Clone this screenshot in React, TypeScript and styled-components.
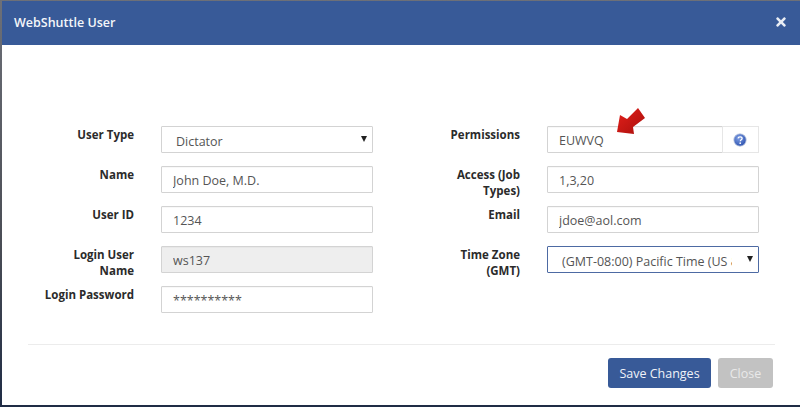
import React, { ReactElement } from 'react';
import styled, { createGlobalStyle } from 'styled-components';
import { FaTimes } from 'react-icons/fa';

const GlobalStyle = createGlobalStyle`
  html, body {
    margin: 0;
    padding: 0;
    background: #56595f;
  }
  * {
    box-sizing: border-box;
  }
`;

const Page = styled.div`
  width: 800px;
  height: 407px;
  overflow: hidden;
  padding: 1px 0 2px 2px;
  background: linear-gradient(#6d7078, #4a4d55 60%, #1f2c45);
  font-family: 'Open Sans', 'Liberation Sans', sans-serif;
`;

const Modal = styled.div`
  display: flex;
  flex-direction: column;
  height: 100%;
  background: #fff;
`;

const Header = styled.div`
  display: flex;
  flex: 0 0 44px;
  align-items: center;
  justify-content: space-between;
  padding: 0 12px 1px 12px;
  background: #385a98;
  color: #f4f6fa;
`;

const Title = styled.h4`
  margin: 0;
  font-size: 12.5px;
  font-weight: 600;
`;

const CloseIcon = styled(FaTimes)`
  width: 14px;
  height: 14px;
  margin-top: -2px;
  color: #e9edf4;
`;

const Body = styled.div`
  flex: 1;
  padding: 81px 24px 0 26px;
`;

const Form = styled.div`
  display: grid;
  grid-template-columns: 345px 345px;
  column-gap: 41px;
  height: 218px;
`;

const Column = styled.div`
  display: flex;
  flex-direction: column;
  gap: 13px;
`;

const Row = styled.div`
  display: grid;
  grid-template-columns: 106px 212px;
  column-gap: 27px;
  height: 27px;
`;

const Label = styled.label`
  padding: 1px 0 0 16px;
  font-size: 11.5px;
  font-weight: 700;
  line-height: 16px;
  text-align: right;
  color: #2b2b2b;
`;

const Input = styled.input`
  width: 100%;
  min-width: 0;
  height: 27px;
  padding: 1px 11px 0;
  border: 1px solid #d3d3d3;
  border-radius: 1px;
  outline: none;
  background: #fff;
  font-family: inherit;
  font-size: 12.5px;
  color: #555;
  box-shadow: inset 0 1px 1px rgba(0, 0, 0, 0.03);

  &:disabled {
    background: #eeeeee;
    opacity: 1;
    -webkit-text-fill-color: #555;
  }
`;

const InputGroup = styled.div`
  position: relative;
  display: flex;
  width: 212px;
`;

const HelpAddon = styled.div`
  display: flex;
  flex: 0 0 37px;
  align-items: center;
  justify-content: center;
  height: 27px;
  margin-left: -1px;
  padding-right: 1px;
  border: 1px solid #e6e6e6;
  background: #fff;
`;

const PointerArrow = styled.svg`
  position: absolute;
  top: -19px;
  left: 69px;
  width: 31px;
  height: 28px;
`;

const SelectWrap = styled.div`
  position: relative;
  width: 212px;
  height: 27px;

  &::after {
    content: '';
    position: absolute;
    top: 10px;
    right: 6px;
    border-left: 3.5px solid transparent;
    border-right: 3.5px solid transparent;
    border-top: 6px solid #222;
    pointer-events: none;
  }
`;

const Select = styled.select<{ $focused?: boolean }>`
  appearance: none;
  display: block;
  width: 100%;
  height: 27px;
  padding: 4px 26px 0 14px;
  border: 1px solid ${(p) => (p.$focused ? '#4d6aa3' : '#d3d3d3')};
  border-radius: 1px;
  outline: none;
  background: #fff;
  font-family: inherit;
  font-size: 12.5px;
  color: #555;
`;

const Footer = styled.div`
  display: flex;
  flex-direction: column;
  height: 60px;
`;

const Divider = styled.hr`
  width: 747px;
  height: 1px;
  margin: 0;
  border: 0;
  background: #ececec;
`;

const Actions = styled.div`
  display: flex;
  justify-content: flex-end;
  gap: 7px;
  padding: 13px 3px 0 0;
`;

const Button = styled.button<{ $primary?: boolean }>`
  height: 30px;
  padding: 0;
  width: ${(p) => (p.$primary ? '103px' : '55px')};
  border: 0;
  border-radius: 3px;
  background: ${(p) => (p.$primary ? '#385a98' : '#c2c2c2')};
  color: ${(p) => (p.$primary ? '#f0f3f8' : '#e9e9e9')};
  font-family: inherit;
  font-size: 12.5px;
`;

function HelpIcon(): ReactElement {
  return (
    <svg width="14" height="14" viewBox="0 0 14 14">
      <defs>
        <radialGradient id="help" cx="40%" cy="35%" r="70%">
          <stop offset="0%" stopColor="#7f9fe4" />
          <stop offset="100%" stopColor="#2a4fae" />
        </radialGradient>
      </defs>
      <circle cx="7" cy="7" r="6.2" fill="url(#help)" stroke="#c3cde0" strokeWidth="0.8" />
      <path d="M5 5.4c.2-1.1 1-1.6 2.1-1.6 1.2 0 2 .7 2 1.6 0 1.4-1.8 1.4-1.8 2.9" fill="none" stroke="#fff" strokeWidth="1.3" />
      <circle cx="7.2" cy="10.2" r="0.85" fill="#fff" />
    </svg>
  );
}

function App(): ReactElement {
  return (
    <Page>
      <GlobalStyle />
      <Modal>
        <Header>
          <Title>WebShuttle User</Title>
          <CloseIcon />
        </Header>
        <Body>
          <Form>
            <Column>
              <Row>
                <Label>User Type</Label>
                <SelectWrap>
                  <Select defaultValue="Dictator">
                    <option>Dictator</option>
                  </Select>
                </SelectWrap>
              </Row>
              <Row>
                <Label>Name</Label>
                <Input defaultValue="John Doe, M.D." />
              </Row>
              <Row>
                <Label>User ID</Label>
                <Input defaultValue="1234" />
              </Row>
              <Row>
                <Label>Login User Name</Label>
                <Input defaultValue="ws137" disabled />
              </Row>
              <Row>
                <Label>Login Password</Label>
                <Input defaultValue="**********" />
              </Row>
            </Column>
            <Column>
              <Row>
                <Label>Permissions</Label>
                <InputGroup>
                  <Input defaultValue="EUWVQ" />
                  <HelpAddon>
                    <HelpIcon />
                  </HelpAddon>
                  <PointerArrow viewBox="0 0 31 28">
                    <defs>
                      <linearGradient id="arrow" x1="0" y1="0" x2="1" y2="1">
                        <stop offset="0%" stopColor="#e5201b" />
                        <stop offset="100%" stopColor="#a80f0c" />
                      </linearGradient>
                    </defs>
                    <path d="M1 25 L4 8 L11 12 L22 1 L29 11 L17 20 L18 27 Z" fill="url(#arrow)" />
                  </PointerArrow>
                </InputGroup>
              </Row>
              <Row>
                <Label>Access (Job Types)</Label>
                <Input defaultValue="1,3,20" />
              </Row>
              <Row>
                <Label>Email</Label>
                <Input defaultValue="jdoe@aol.com" />
              </Row>
              <Row>
                <Label>Time Zone (GMT)</Label>
                <SelectWrap>
                  <Select $focused defaultValue="pst">
                    <option value="pst">(GMT-08:00) Pacific Time (US &amp; Canada)</option>
                  </Select>
                </SelectWrap>
              </Row>
            </Column>
          </Form>
          <Footer>
            <Divider />
            <Actions>
              <Button $primary>Save Changes</Button>
              <Button>Close</Button>
            </Actions>
          </Footer>
        </Body>
      </Modal>
    </Page>
  );
}

export default App;
